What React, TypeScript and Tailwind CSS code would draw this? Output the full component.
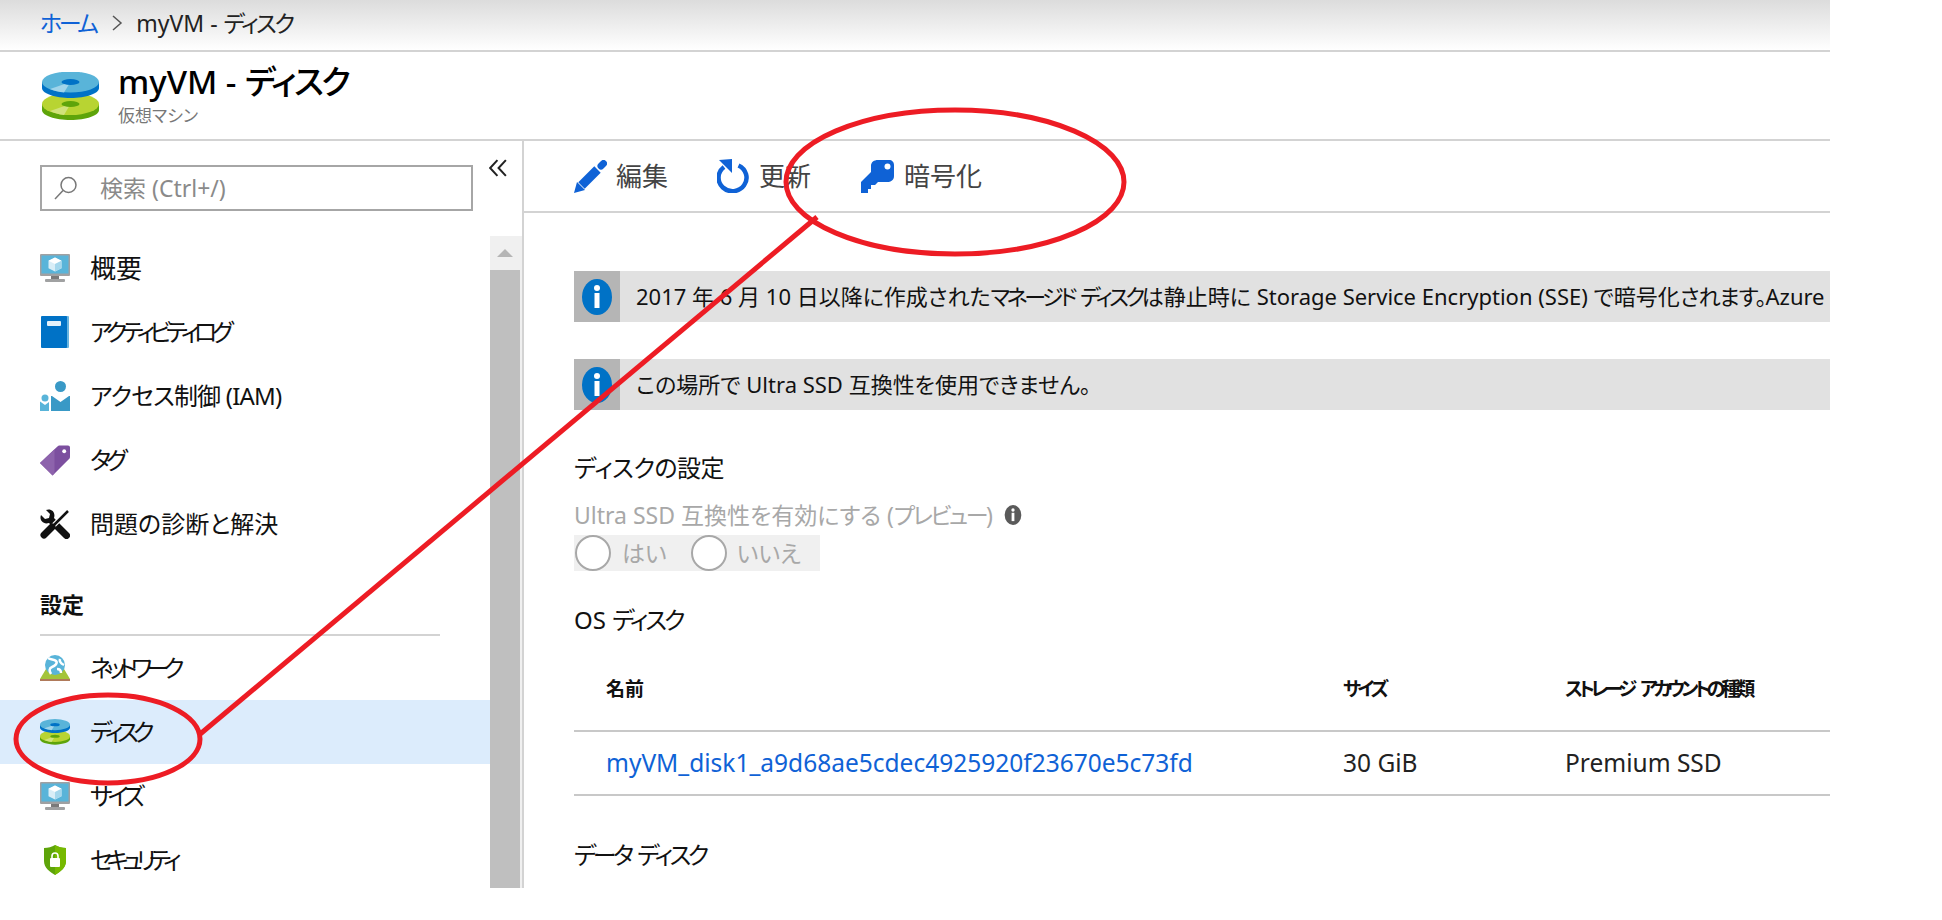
const font = "font-['Noto_Sans','Noto_Sans_CJK_JP',sans-serif] [font-feature-settings:'palt']";

function DiskIcon({ className = "w-[57px] h-[48px]" }: { className?: string }) {
  return (
    <svg className={className} viewBox="0 0 57 48">
      <path d="M0 32v6c0 5.500 12.800 10 28.500 10S57 43.500 57 38v-6z" fill="#5ea40a" />
      <ellipse cx="28.500" cy="32" rx="28.500" ry="11" fill="#b8d432" />
      <path d="M28.500 32L8 39c4 2 9 3.500 14 4z" fill="#d0e27a" />
      <ellipse cx="28.500" cy="32" rx="9" ry="3" fill="#5ea40a" />
      <path d="M0 10v6c0 5.500 12.800 10 28.500 10S57 21.500 57 16v-6z" fill="#0072c6" />
      <ellipse cx="28.500" cy="10" rx="28.500" ry="10.500" fill="#59b4d9" />
      <path d="M28.500 10L8 17c4 2 9 3 14 3.500z" fill="#9fd4ea" />
      <ellipse cx="28.500" cy="10" rx="9" ry="3" fill="#0072c6" />
    </svg>
  );
}

function VmIcon() {
  return (
    <svg className="w-[30px] h-[28px]" viewBox="0 0 30 28">
      <rect width="30" height="22" rx="1" fill="#a0a1a2" />
      <rect x="1.500" y="1.500" width="27" height="18" fill="#59b4d9" />
      <rect x="11" y="22" width="8" height="3.500" fill="#7a7a7a" />
      <rect x="5" y="25" width="20" height="3" rx="1" fill="#a0a1a2" />
      <path d="M15 3.500l6.500 3.200v7.500L15 17.500l-6.500-3.300V6.700z" fill="#d9eef7" />
      <path d="M15 3.500l6.500 3.200L15 10 8.500 6.700z" fill="#fff" />
      <path d="M15 10l6.500-3.300v7.500L15 17.500z" fill="#a5d7ec" />
    </svg>
  );
}

function BookIcon() {
  return (
    <svg className="w-[28px] h-[32px]" viewBox="0 0 28 32">
      <rect x="2" y="0" width="26" height="32" rx="1" fill="#68b5e0" />
      <rect width="26" height="32" rx="1" fill="#0072c6" />
      <rect x="6" y="5" width="14" height="5" rx="1" fill="#e4f1fa" />
    </svg>
  );
}

function PeopleIcon() {
  return (
    <svg className="w-[30px] h-[30px]" viewBox="0 0 30 30">
      <circle cx="20.500" cy="5.500" r="5.500" fill="#3999c6" />
      <path d="M12 15l8.500 6 8.500-6h1v15H11V15z" fill="#3999c6" />
      <circle cx="5" cy="17" r="3.500" fill="#59b4d9" />
      <path d="M0 20.500l5 3.500 4-3v9H0z" fill="#59b4d9" />
    </svg>
  );
}

function TagIcon() {
  return (
    <svg className="w-[31px] h-[31px]" viewBox="0 0 31 31">
      <path d="M0 18L18 1c1-1 2-1 3-1h8c1 0 2 1 2 2v9c0 1 0 2-1 3L13 31z" fill="#7c4f9f" />
      <path d="M0 18L15 4v24.500L13 31z" fill="#8d63ac" />
      <circle cx="25" cy="6" r="2" fill="#fff" />
    </svg>
  );
}

function ToolsIcon() {
  return (
    <svg className="w-[30px] h-[30px]" viewBox="0 0 30 30" fill="none">
      <path d="M6 1L10 5 9 9 5 10 1 6C-1 11 3 16 9 14L24 29a2.500 2.500 0 0 0 5-5L14 9C16 3 11-1 6 1z" fill="#111" />
      <path d="M27.500 2.500L13 17" stroke="#fff" strokeWidth="5" />
      <path d="M28 2L14 16" stroke="#111" strokeWidth="2.500" />
      <path d="M12 18L4 26" stroke="#111" strokeWidth="7" strokeLinecap="round" />
    </svg>
  );
}

function NetworkIcon() {
  return (
    <svg className="w-[30px] h-[26px]" viewBox="0 0 30 26">
      <path d="M6 14h18l6 10H0z" fill="#a4c43a" />
      <rect y="24" width="30" height="2" fill="#b07a5a" />
      <circle cx="15" cy="10" r="10" fill="#59b4d9" />
      <path d="M8 3c3 2 6 1 8 3s-1 5-4 6-3 4-1 7" stroke="#fff" strokeWidth="2.500" fill="none" />
      <path d="M20 4c-1 3 2 5 4 6M17 14c2 0 4 1 4 4" stroke="#fff" strokeWidth="2.500" fill="none" />
    </svg>
  );
}

function ShieldIcon() {
  return (
    <svg className="w-[22px] h-[30px]" viewBox="0 0 22 30">
      <path d="M11 0c3 2 7 3 11 3v13c0 7-6 11-11 14C6 27 0 23 0 16V3c4 0 8-1 11-3z" fill="#5ea40a" />
      <path d="M11 0c3 2 7 3 11 3v13c0 7-6 11-11 14z" fill="#76b900" />
      <rect x="6" y="13" width="10" height="9" rx="1" fill="#fff" />
      <path d="M8 13v-2a3 3 0 016 0v2" stroke="#fff" strokeWidth="1.600" fill="none" />
    </svg>
  );
}

function InfoBadge({ className = "w-[30px] h-[36px]", fill = "#0072c6" }: { className?: string; fill?: string }) {
  return (
    <svg className={className} viewBox="0 0 30 36">
      <ellipse cx="15" cy="18" rx="15" ry="18" fill={fill} />
      <circle cx="15" cy="9" r="3" fill="#fff" />
      <rect x="12.500" y="14" width="5" height="15" fill="#fff" />
    </svg>
  );
}

function Banner({ children }: { children: React.ReactNode }) {
  return (
    <div className="flex h-[51px] bg-[#e1e1e1]">
      <div className="w-[46px] shrink-0 flex items-center justify-center bg-[#b5b5b5]">
        <InfoBadge />
      </div>
      <div className="pl-4 flex items-center text-[22px] text-[#111] whitespace-pre overflow-hidden">{children}</div>
    </div>
  );
}

const navTop = [
  { icon: <VmIcon />, label: "概要", text: "text-[26px]" },
  { icon: <BookIcon />, label: "アクティビティログ", text: "tracking-[-5.500px]" },
  { icon: <PeopleIcon />, label: "アクセス制御 (IAM)", text: "tracking-[-0.800px]" },
  { icon: <TagIcon />, label: "タグ", text: "tracking-[-5px]" },
  { icon: <ToolsIcon />, label: "問題の診断と解決", text: "" },
];

const navSettings = [
  { icon: <NetworkIcon />, label: "ネットワーク", text: "tracking-[-6.500px]" },
  { icon: <DiskIcon className="w-[30px] h-[26px]" />, label: "ディスク", text: "tracking-[-6px]", active: true },
  { icon: <VmIcon />, label: "サイズ", text: "tracking-[-5px]" },
  { icon: <ShieldIcon />, label: "セキュリティ", text: "tracking-[-6.500px]" },
];

function NavRow({ icon, label, text, active }: { icon: React.ReactNode; label: string; text: string; active?: boolean }) {
  return (
    <div className={`flex items-center h-16 pl-10 text-[24px] text-[#111] ${active ? "bg-[#dcecfc]" : ""}`}>
      <div className="w-[50px] flex justify-center pr-5 shrink-0">{icon}</div>
      <span className={`whitespace-nowrap ${text}`}>{label}</span>
    </div>
  );
}

export default function App() {
  return (
    <div className={`relative w-[1942px] h-[920px] bg-white overflow-hidden ${font}`}>
      <div className="w-[1830px] h-[888px] flex flex-col">
        {/* breadcrumb */}
        <div className="h-[52px] shrink-0 border-b-2 border-[#d3d3d3] bg-gradient-to-b from-[#dcdcdc] to-white flex items-center pl-10 pb-1 text-[23px]">
          <span className="text-[#0f62d6] tracking-[-3.500px]">ホーム</span>
          <svg className="w-4 h-5 ml-[14px] mr-[11px]" viewBox="0 0 16 20" fill="none" stroke="#555" strokeWidth="1.500">
            <path d="M4 3l8 7-8 7" />
          </svg>
          <span className="text-[#222]">
            myVM - <span className="tracking-[-2.500px]">ディスク</span>
          </span>
        </div>

        {/* title */}
        <div className="h-[89px] shrink-0 border-b-2 border-[#d3d3d3] flex items-center pl-[42px]">
          <DiskIcon />
          <div className="ml-[19px]">
            <div className="text-[33px] leading-[38px] font-medium text-black">
              myVM - <span className="tracking-[-2.500px]">ディスク</span>
            </div>
            <div className="text-[17px] leading-[26px] text-[#777] pt-[2px]">仮想マシン</div>
          </div>
        </div>

        <div className="flex flex-1 min-h-0">
          {/* sidebar */}
          <div className="w-[524px] shrink-0 border-r-2 border-[#d3d3d3] flex flex-col">
            <div className="flex h-[95px] shrink-0 pt-6 pl-10">
              <div className="w-[433px] h-[46px] border-2 border-[#a6a6a6] flex items-center pl-[12px] text-[23px] text-[#8a8a8a]">
                <svg className="w-6 h-6" viewBox="0 0 24 24" fill="none" stroke="#777" strokeWidth="1.500">
                  <circle cx="14.500" cy="9" r="7.500" />
                  <path d="M9 14.500L1 23" />
                </svg>
                <span className="ml-[22px]">検索 (Ctrl+/)</span>
              </div>
              <svg className="w-[18px] h-[18px] ml-[16px] -mt-[6px]" viewBox="0 0 16 16" fill="none" stroke="#222" strokeWidth="1.800">
                <path d="M7.500 1L1 8l6.500 7M15 1L8.500 8l6.500 7" />
              </svg>
            </div>
            <div className="flex flex-1 min-h-0">
              <div className="flex-1 min-w-0 overflow-hidden">
                {navTop.map((n) => (
                  <NavRow key={n.label} icon={n.icon} label={n.label} text={n.text} />
                ))}
                <div className="mt-[17px] ml-10 mr-[50px] h-[63px] border-b-2 border-[#d3d3d3] flex items-center pt-[2px] text-[22px] font-semibold text-[#111]">
                  設定
                </div>
                {navSettings.map((n) => (
                  <NavRow key={n.label} icon={n.icon} label={n.label} text={n.text} active={n.active} />
                ))}
              </div>
              <div className="w-[32px] shrink-0 bg-[#f0f0f0] flex flex-col items-center pr-[2px]">
                <div className="h-[34px] flex items-center justify-center">
                  <div className="w-0 h-0 border-x-8 border-x-transparent border-b-8 border-b-[#b5b5b5]" />
                </div>
                <div className="flex-1 w-[30px] bg-[#bfbfbf]" />
              </div>
            </div>
          </div>

          {/* main */}
          <div className="flex-1 min-w-0 flex flex-col">
            <div className="h-[72px] shrink-0 border-b-2 border-[#d3d3d3] flex items-center pl-[50px] text-[26px] text-[#444]">
              <svg className="w-[33px] h-[33px]" viewBox="0 0 33 33" fill="none">
                <path d="M7.500 25.500L23.500 9.500" stroke="#0f62d6" strokeWidth="9" />
                <path d="M27 6l2.500-2.500" stroke="#0f62d6" strokeWidth="7" strokeLinecap="round" />
                <path d="M0 33l3-11 8 8z" fill="#0f62d6" />
              </svg>
              <span className="ml-[9px]">編集</span>
              <svg className="w-[32px] h-[34px] ml-[49px]" viewBox="0 0 32 34" fill="none">
                <path d="M21.500 6.500A14 13.500 0 1 1 7 8" stroke="#0f62d6" strokeWidth="4.500" />
                <path d="M2 1l13-1v14z" fill="#0f62d6" />
              </svg>
              <span className="ml-[10px]">更新</span>
              <svg className="w-[33px] h-[33px] ml-[50px]" viewBox="0 0 33 33">
                <path d="M0 33V22L10 12V6C10 2 13 0 17 0H28C31 0 33 2 33 5V16C33 20 30 22 26 22H17L14 25H10V29H7V33Z" fill="#0f62d6" />
                <circle cx="26.500" cy="6.500" r="3" fill="#fff" />
              </svg>
              <span className="ml-[10px]">暗号化</span>
            </div>

            <div className="pl-[50px] flex-1 min-h-0">
              <div className="pt-[58px]">
                <Banner>
                  2017 年 6 月 10 日以降に作成された<span className="tracking-[-3.500px] [word-spacing:4px]">マネージド ディスク</span>は静止時に Storage Service Encryption (SSE) で暗号化<span className="tracking-[-1px]">されます。</span>Azure
                </Banner>
              </div>
              <div className="pt-[37px]">
                <Banner>この場所で Ultra SSD 互換性を使用できません。</Banner>
              </div>

              <div className="mt-[40px] text-[24px] leading-9 text-[#111] tracking-[-0.500px]">ディスクの設定</div>
              <div className="mt-[13px] flex items-center text-[23px] leading-8 text-[#a8a8a8]">
                Ultra SSD 互換性を有効にする (<span className="tracking-[-2.500px]">プレビュー</span>)
                <InfoBadge className="w-[18px] h-[20px] ml-[11px]" fill="#5a5a5a" />
              </div>
              <div className="mt-[4px] w-[246px] h-[36px] bg-[#f0f0f0] flex items-center text-[23px] text-[#a8a8a8]">
                <div className="w-[36px] h-[36px] ml-[1px] rounded-full border-2 border-[#a8a8a8] bg-white" />
                <span className="ml-[11px]">はい</span>
                <div className="w-[36px] h-[36px] ml-[24px] rounded-full border-2 border-[#a8a8a8] bg-white" />
                <span className="ml-[10px]">いいえ</span>
              </div>

              <div className="mt-[31px] text-[24px] leading-9 text-[#111]">
                OS <span className="tracking-[-3px]">ディスク</span>
              </div>
              <div className="mt-[20px] h-[74px] border-b-2 border-[#c8c8c8] grid grid-cols-[737px_222px_1fr] items-center pl-[32px] pb-[10px] text-[19px] font-semibold text-[#111] whitespace-nowrap">
                <span>名前</span>
                <span className="tracking-[-3.500px]">サイズ</span>
                <span className="tracking-[-4px] [word-spacing:6px]">ストレージ アカウントの種類</span>
              </div>
              <div className="h-[64px] border-b-2 border-[#c8c8c8] grid grid-cols-[737px_222px_1fr] items-center pl-[32px] text-[24.500px] text-[#222]">
                <span className="text-[#0f62d6]">myVM_disk1_a9d68ae5cdec4925920f23670e5c73fd</span>
                <span>30 GiB</span>
                <span>Premium SSD</span>
              </div>
              <div className="mt-[41px] text-[24px] leading-9 text-[#111] tracking-[-3.500px] [word-spacing:4px]">データ ディスク</div>
            </div>
          </div>
        </div>
      </div>

      {/* red annotation drawn over the screenshot */}
      <svg className="absolute inset-0 w-[1942px] h-[920px] pointer-events-none" viewBox="0 0 1942 920" fill="none" stroke="#ed1c24" strokeWidth="5">
        <ellipse cx="955" cy="182" rx="169" ry="72" />
        <ellipse cx="108" cy="739" rx="92" ry="44" />
        <path d="M817 217L199 735" />
      </svg>
    </div>
  );
}
